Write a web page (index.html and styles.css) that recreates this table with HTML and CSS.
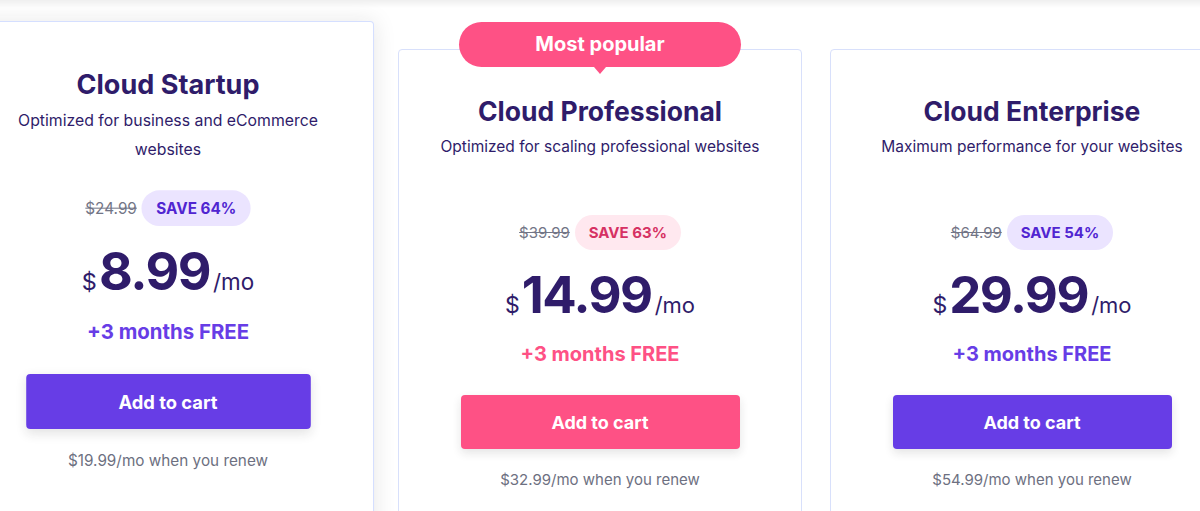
FILE: index.html
```html
<!DOCTYPE html>
<html lang="en">
<head>
<meta charset="utf-8">
<title>Cloud hosting plans</title>
<link rel="stylesheet" href="styles.css">
</head>
<body>
<div class="topbar"></div>
<main class="plans">
  <section class="card card--raised">
    <h2 class="card__title">Cloud Startup</h2>
    <p class="card__desc">Optimized for business and eCommerce websites</p>
    <div class="card__save-row">
      <span class="card__old">$24.99</span>
      <span class="pill pill--purple">SAVE 64%</span>
    </div>
    <div class="price">
      <span class="price__cur">$</span><span class="price__amount">8.99</span><span class="price__per">/mo</span>
    </div>
    <div class="free free--purple">+3 months FREE</div>
    <button class="btn btn--purple">Add to cart</button>
    <p class="renew">$19.99/mo when you renew</p>
  </section>

  <section class="card card--popular">
    <div class="badge">Most popular</div>
    <h2 class="card__title">Cloud Professional</h2>
    <p class="card__desc">Optimized for scaling professional websites</p>
    <div class="card__save-row">
      <span class="card__old">$39.99</span>
      <span class="pill pill--pink">SAVE 63%</span>
    </div>
    <div class="price">
      <span class="price__cur">$</span><span class="price__amount">14.99</span><span class="price__per">/mo</span>
    </div>
    <div class="free free--pink">+3 months FREE</div>
    <button class="btn btn--pink">Add to cart</button>
    <p class="renew">$32.99/mo when you renew</p>
  </section>

  <section class="card">
    <h2 class="card__title">Cloud Enterprise</h2>
    <p class="card__desc">Maximum performance for your websites</p>
    <div class="card__save-row">
      <span class="card__old">$64.99</span>
      <span class="pill pill--purple">SAVE 54%</span>
    </div>
    <div class="price">
      <span class="price__cur">$</span><span class="price__amount">29.99</span><span class="price__per">/mo</span>
    </div>
    <div class="free free--purple">+3 months FREE</div>
    <button class="btn btn--purple">Add to cart</button>
    <p class="renew">$54.99/mo when you renew</p>
  </section>
</main>
</body>
</html>
```
FILE: styles.css
```css
* { box-sizing: border-box; }
html, body {
  margin: 0;
  padding: 0;
  background: #ffffff;
  overflow: hidden;
}
body {
  font-family: "Inter", "DejaVu Sans", sans-serif;
  color: #2f1c6a;
}
.topbar {
  height: 8px;
  background: linear-gradient(#efefef, #ffffff);
}
.plans {
  display: flex;
  justify-content: center;
  align-items: flex-start;
  gap: 28px;
  padding-top: 41px;
}
.card {
  position: relative;
  flex: 0 0 404px;
  background: #fff;
  border: 1px solid #d8e0fb;
  border-radius: 4px;
  padding: 43px 32px 70px;
  display: flex;
  flex-direction: column;
  align-items: center;
  text-align: center;
}
.card > * { flex-shrink: 0; }
.card--raised {
  transform-origin: top center;
  transform: translateY(-28px) scale(1.02);
  box-shadow: 0 0 22px rgba(29, 30, 32, 0.10);
  border-color: #d5dfff;
  z-index: 1;
}
.badge {
  position: absolute;
  top: -28px;
  left: 50%;
  transform: translateX(-50%);
  width: 282px;
  height: 45px;
  border-radius: 23px;
  background: #fe5185;
  color: #fff;
  font-weight: 700;
  font-size: 20px;
  line-height: 45px;
}
.badge::after {
  content: "";
  position: absolute;
  left: 50%;
  bottom: -7px;
  margin-left: -6px;
  border-left: 6px solid transparent;
  border-right: 6px solid transparent;
  border-top: 7px solid #fe5185;
}
.card__title {
  margin: 0;
  font-size: 26.5px;
  line-height: 36px;
  font-weight: 700;
  color: #2f1c6a;
}
.card__desc {
  margin: 4px 0 0;
  font-size: 15.5px;
  line-height: 28px;
  min-height: 56px;
  color: #2f1c6a;
}
.card__save-row {
  margin-top: 26px;
  display: flex;
  align-items: center;
  gap: 5px;
}
.card__old {
  font-size: 15px;
  color: #727586;
  text-decoration: line-through;
}
.pill {
  height: 35px;
  padding: 0 14px;
  border-radius: 18px;
  font-size: 15px;
  font-weight: 700;
  line-height: 35px;
}
.pill--purple { background: #ebe4ff; color: #5025d1; }
.pill--pink { background: #ffe8ef; color: #d63163; }
.price {
  margin-top: 19px;
  display: flex;
  align-items: baseline;
  color: #2f1c6a;
}
.price > span { line-height: 1; }
.price__cur { font-size: 23px; margin-right: 2px; }
.price__amount { font-size: 51px; font-weight: 700; letter-spacing: -1.5px; }
.price__per { font-size: 22px; margin-left: 3px; }
.free {
  margin-top: 20px;
  font-size: 20px;
  font-weight: 700;
  line-height: 28px;
}
.free--purple { color: #673de6; }
.free--pink { color: #fe5185; }
.btn {
  display: block;
  margin-top: 27px;
  width: 279px;
  height: 54px;
  border: 0;
  border-radius: 4px;
  font-family: inherit;
  font-size: 18px;
  font-weight: 700;
  color: #fff;
  box-shadow: 0 4px 10px rgba(29, 30, 32, 0.12);
  cursor: pointer;
}
.btn--purple { background: #673de6; }
.btn--pink { background: #fe5185; }
.renew {
  margin: 19px 0 0;
  font-size: 15px;
  line-height: 24px;
  color: #6d7081;
}
```
